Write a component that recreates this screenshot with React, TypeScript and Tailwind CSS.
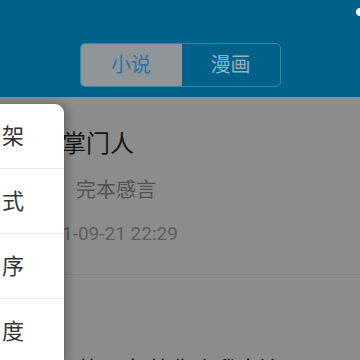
const menu = ["书架", "模式", "排序", "进度"];

export default function App() {
  return (
    <div
      className="relative w-[360px] h-[360px] overflow-hidden bg-[#8c8c8c]"
      style={{ fontFamily: '"Roboto", "Noto Sans CJK SC", sans-serif' }}
    >
      <div className="relative h-[97px] bg-[#00628a] flex justify-center pt-[43px]">
        <div className="w-[201px] h-[44px] rounded-[5px] border border-[#3a83a2] flex overflow-hidden">
          <div className="w-[101px] bg-[#8f9599] flex items-center justify-center text-[20px] text-[#2a77a0]">
            小说
          </div>
          <div className="flex-1 flex items-center justify-center text-[20px] text-[#8fb2c3]">
            漫画
          </div>
        </div>
        <div className="absolute right-[-4px] top-[8px] w-[8px] h-[8px] rounded-full bg-white" />
      </div>

      <div className="pl-[62px]">
        <div className="h-[178px] border-b border-[#848484] pt-[32px]">
          <div className="text-[24px] leading-[30px] text-[#161616]">掌门人</div>
          <div className="mt-[18px] ml-[14px] text-[20px] leading-[26px] text-[#535353]">
            完本感言
          </div>
          <div className="mt-[19px] text-[19px] leading-[24px] text-[#5e5e5e]">
            1-09-21 22:29
          </div>
        </div>
        <div className="pt-[81px] ml-[16px] text-[22px] leading-[28px] text-[#1a1a1a]">
          第一章 等你来我身边
        </div>
      </div>

      <div className="absolute left-[-24px] top-[104px] w-[88px] bg-white rounded-tr-[9px] shadow-[3px_0_10px_rgba(0,0,0,0.3)]">
        {menu.map((m, i) => (
          <div
            key={m}
            className={`h-[65px] flex items-center pl-[26px] text-[22px] text-[#333] ${
              i < menu.length - 1 ? "border-b border-[#ececec]" : ""
            }`}
          >
            {m.slice(1)}
          </div>
        ))}
      </div>
    </div>
  );
}
